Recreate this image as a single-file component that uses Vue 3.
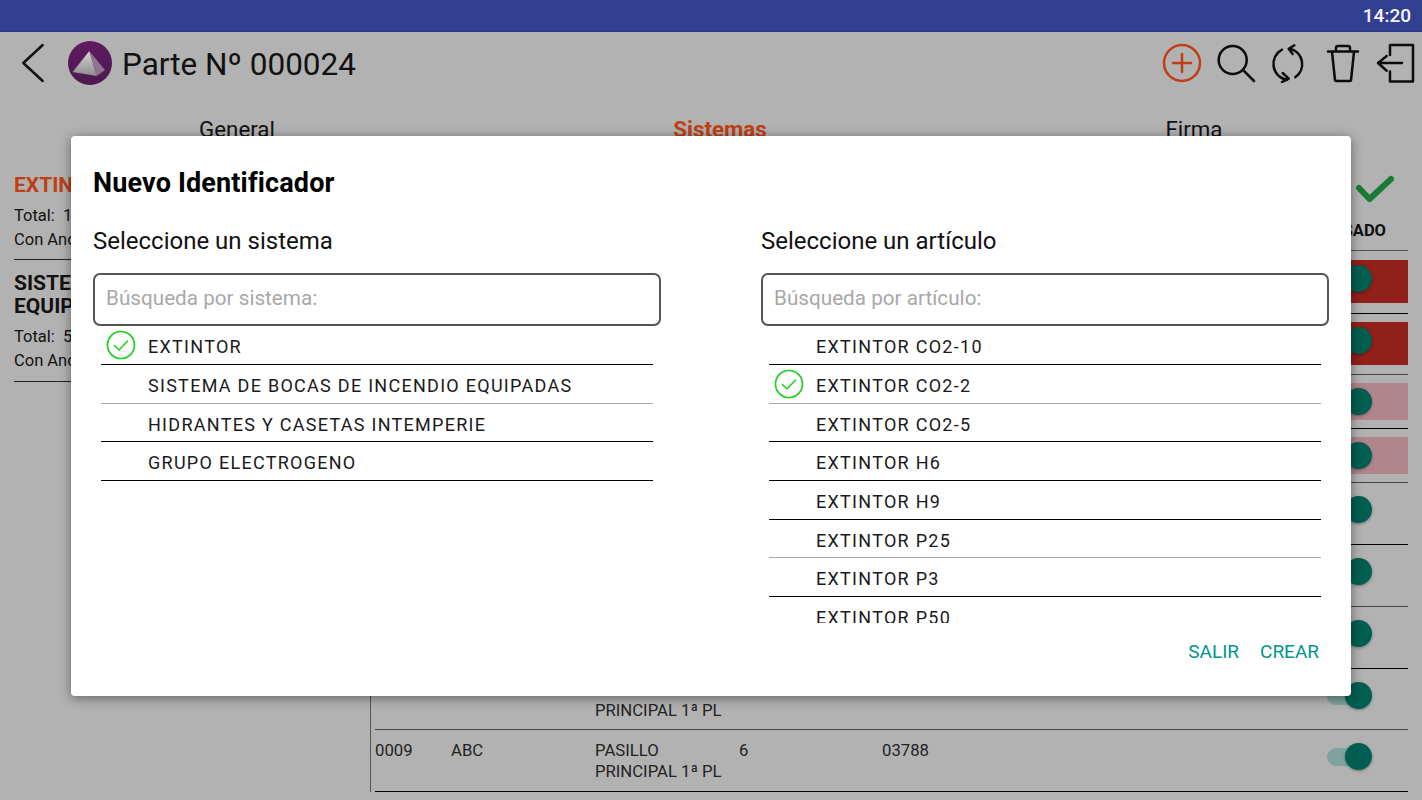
<script setup>
const blocks = [
  { title: 'EXTINTOR', cls: 'accent', total: 'Total:  1' },
  { title: 'SISTEMA DE BOCAS DE INCENDIO EQUIPADAS', cls: '', total: 'Total:  5' },
]
const rows = [
  { key: 1, h: 63, tone: 'red' },
  { key: 2, h: 61, tone: 'red' },
  { key: 3, h: 54, tone: 'pink' },
  { key: 4, h: 54, tone: 'pink' },
  { key: 5, h: 62, tone: '' },
  { key: 6, h: 62, tone: '' },
  { key: 7, h: 62, tone: '' },
  { key: 8, h: 61, tone: '', loc: ['PASILLO', 'PRINCIPAL 1ª PL'] },
  { key: 9, h: 62, tone: '', id: '0009', name: 'ABC', loc: ['PASILLO', 'PRINCIPAL 1ª PL'], n: '6', code: '03788' },
]
const systems = ['EXTINTOR', 'SISTEMA DE BOCAS DE INCENDIO EQUIPADAS', 'HIDRANTES Y CASETAS INTEMPERIE', 'GRUPO ELECTROGENO']
const articles = ['EXTINTOR CO2-10', 'EXTINTOR CO2-2', 'EXTINTOR CO2-5', 'EXTINTOR H6', 'EXTINTOR H9', 'EXTINTOR P25', 'EXTINTOR P3', 'EXTINTOR P50']
const columns = [
  { title: 'Seleccione un sistema', hint: 'Búsqueda por sistema:', items: systems, selected: 0 },
  { title: 'Seleccione un artículo', hint: 'Búsqueda por artículo:', items: articles, selected: 1 },
]
</script>

<template>
  <div class="app">
    <div class="status">14:20</div>

    <header class="bar">
      <svg class="back" viewBox="0 0 24 40" width="24" height="40">
        <path d="M21.700 2 L2.300 20 L21.700 38" />
      </svg>
      <svg class="logo" viewBox="0 0 44 44" width="44" height="44">
        <defs>
          <linearGradient id="disc" x1="0" y1="0" x2="0" y2="1">
            <stop offset="0" stop-color="#5f1b60" />
            <stop offset="1" stop-color="#4c1a50" />
          </linearGradient>
          <linearGradient id="face" x1="0" y1="0" x2="0" y2="1">
            <stop offset="0" stop-color="#d4d3d4" />
            <stop offset="1" stop-color="#8f8e8f" />
          </linearGradient>
        </defs>
        <circle cx="22" cy="22" r="22" fill="url(#disc)" />
        <path d="M21.300 10 L4.700 31 L28.700 35 Z" fill="url(#face)" />
        <path d="M21.300 10 L37 29 L28.700 35 Z" fill="#8d7590" />
      </svg>
      <h1 class="doc">Parte Nº 000024</h1>
      <div class="tools">
        <svg viewBox="0 0 40 40" width="40" height="40" class="ico orange">
          <circle cx="20" cy="20" r="18" /><path d="M20 11 V29 M11 20 H29" />
        </svg>
        <svg viewBox="0 0 40 40" width="40" height="40" class="ico">
          <circle cx="16.700" cy="17" r="14" /><path d="M27 27 L38 38" />
        </svg>
        <svg viewBox="0 0 40 40" width="40" height="40" class="ico">
          <path d="M13 6.700 A16 16 0 0 0 18 36.700 M21.300 5.700 A16 16 0 0 1 26.300 34.300" />
          <path d="M25.300 2.300 L19.700 5.700 L23.700 11 M13.700 30 L19.700 35.700 L13 39" />
        </svg>
        <svg viewBox="0 0 40 40" width="40" height="40" class="ico">
          <path d="M5 8.500 H35 M13 8 V5 Q13 3 15 3 H25 Q27 3 27 5 V8 M9 9 L12 37 Q12 38 13.500 38 H26.500 Q28 38 28 37 L31 9" />
        </svg>
        <svg viewBox="0 0 40 40" width="40" height="40" class="ico">
          <path d="M14 12 V2 H37 V38.500 H14 V28.500 M2 20 H26 M10.700 13 L2 20 L10.700 27.700" />
        </svg>
      </div>
    </header>

    <nav class="tabs">
      <span>General</span>
      <span class="on">Sistemas</span>
      <span>Firma</span>
    </nav>

    <main class="body">
      <aside class="side">
        <section v-for="b in blocks" :key="b.title" class="block">
          <h2 :class="b.cls">{{ b.title }}</h2>
          <p>{{ b.total }}</p>
          <p>Con Anomalías</p>
        </section>
      </aside>

      <div class="table">
        <div class="thead">
          <svg class="tick" viewBox="0 0 38 28" width="38" height="28">
            <path d="M3 13 L13.500 24 L35 4" />
          </svg>
          <div class="tlabel">REVISADO</div>
        </div>
        <div v-for="r in rows" :key="r.key" class="row" :style="{ height: r.h + 'px' }">
          <span>{{ r.id }}</span>
          <span>{{ r.name }}</span>
          <span><span v-for="l in r.loc" :key="l" class="ln">{{ l }}</span></span>
          <span>{{ r.n }}</span>
          <span>{{ r.code }}</span>
          <div class="state" :class="r.tone">
            <div class="switch"><i class="knob"></i></div>
          </div>
        </div>
      </div>
    </main>

    <div class="overlay">
      <section class="dialog">
        <h2 class="dtitle">Nuevo Identificador</h2>
        <div class="cols">
          <div v-for="c in columns" :key="c.title" class="col">
            <h3>{{ c.title }}</h3>
            <input class="search" :placeholder="c.hint" />
            <ul class="list">
              <li v-for="(it, i) in c.items" :key="it">
                <svg v-if="i === c.selected" class="ok" viewBox="0 0 30 30" width="30" height="30">
                  <circle cx="15" cy="15" r="13.500" /><path d="M8.500 15.500 L13 20 L21.500 11" />
                </svg>
                <span>{{ it }}</span>
              </li>
            </ul>
          </div>
        </div>
        <footer class="actions">
          <span>SALIR</span>
          <span>CREAR</span>
        </footer>
      </section>
    </div>
  </div>
</template>

<style scoped>
.app {
  position: relative;
  width: 1422px;
  height: 800px;
  overflow: hidden;
  background: #b2b2b2;
  color: #111;
  font-family: Roboto, "Liberation Sans", sans-serif;
}
.status {
  box-sizing: border-box;
  height: 32px;
  padding: 5px 11px 0 0;
  text-align: right;
  font-size: 19px;
  line-height: 22px;
  font-weight: 500;
  color: #f4f4f8;
  background: #323f91;
  border-bottom: 1px solid #24398f;
}
.bar {
  display: flex;
  align-items: center;
  height: 62px;
  padding-left: 21px;
}
.back { margin-right: 23px; }
.back path { fill: none; stroke: #111; stroke-width: 2.500; stroke-linecap: round; stroke-linejoin: round; }
.logo { margin-right: 10px; }
.doc {
  margin: 3px 0 0;
  font-size: 31.500px;
  line-height: 40px;
  font-weight: 400;
}
.tools {
  display: flex;
  gap: 13.500px;
  margin-left: auto;
  padding-right: 6px;
}
.ico { fill: none; stroke: #0c0c0c; stroke-width: 2.500; stroke-linecap: round; stroke-linejoin: round; }
.orange { stroke: #c04016; }
.tabs {
  display: grid;
  grid-template-columns: 474px 492px 456px;
  padding-top: 23px;
  font-size: 22.300px;
  line-height: 24px;
  text-align: center;
}
.tabs .on { color: #c04016; font-weight: 700; }
.body { display: flex; align-items: flex-start; margin-top: -1px; }
.side {
  box-sizing: border-box;
  width: 371px;
  height: 652px;
  padding: 34px 14px 0;
  border-right: 1px solid #555;
}
.block { padding-bottom: 7px; border-bottom: 1px solid #222; margin-bottom: 12px; }
.block:last-child { padding-bottom: 8px; }
.block h2 {
  margin: 0 0 7px;
  font-size: 21px;
  line-height: 23px;
  font-weight: 700;
}
.block h2.accent { color: #c04016; }
.block p {
  margin: 0;
  font-size: 16.500px;
  line-height: 24px;
  white-space: pre;
}
.table {
  box-sizing: border-box;
  width: 1033px;
  margin-left: 4px;
}
.thead {
  box-sizing: border-box;
  height: 111px;
  padding-top: 35px;
  border-bottom: 1px solid #555;
}
.tick { display: block; margin-left: 981px; }
.tick path { fill: none; stroke: #1a7a36; stroke-width: 6; stroke-linecap: round; stroke-linejoin: round; }
.tlabel {
  margin: 19px 22px 0 0;
  text-align: right;
  font-size: 16.500px;
  line-height: 18px;
  font-weight: 700;
}
.row {
  box-sizing: border-box;
  display: grid;
  grid-template-columns: 76px 144px 144px 143px 1fr 118px;
  padding-top: 11px;
  border-bottom: 1px solid #444;
  font-size: 16.700px;
  line-height: 20.500px;
  color: #222;
}
.row:nth-child(even) { border-bottom-color: #000; }
.ln { display: block; white-space: nowrap; }
.state {
  align-self: start;
  margin-top: -3px;
  padding: 5px 36px 0 0;
  display: flex;
  justify-content: flex-end;
}
.row:nth-child(2) .state { margin-top: -2px; }
.state.red { height: 43px; box-sizing: border-box; background: #91201a; }
.state.pink { height: 37px; box-sizing: border-box; background: #b0868c; }
.switch {
  position: relative;
  width: 45px;
  height: 27px;
}
.switch::before {
  content: "";
  position: absolute;
  left: 0;
  right: 9px;
  top: 4.500px;
  height: 18px;
  border-radius: 9px;
  background: #7fa39c;
}
.knob {
  position: absolute;
  right: 0;
  top: 0;
  width: 27px;
  height: 27px;
  border-radius: 50%;
  background: #005f50;
  box-shadow: 0 1px 3px rgba(0, 0, 0, 0.35);
}
.overlay {
  position: absolute;
  inset: 32px 0 0;
  display: flex;
  align-items: center;
  justify-content: center;
}
.dialog {
  box-sizing: border-box;
  width: 1280px;
  height: 560px;
  padding: 32px 22px 0;
  background: #fff;
  border-radius: 4px;
  box-shadow: 0 2px 12px rgba(0, 0, 0, 0.45);
  color: #000;
}
.dtitle {
  margin: 0 0 28px;
  font-size: 27px;
  line-height: 30px;
  font-weight: 700;
  letter-spacing: 0.15px;
}
.cols { display: grid; grid-template-columns: 568px 568px; gap: 100px; }
.col h3 {
  margin: 1px 0 18px;
  font-size: 24px;
  line-height: 28px;
  font-weight: 400;
  color: #111;
}
.search {
  box-sizing: border-box;
  display: block;
  width: 100%;
  height: 53px;
  padding: 0 11px 3px;
  border: 2px solid #555;
  border-radius: 7px;
  outline: none;
  background: #fff;
  font-family: inherit;
  font-size: 20.700px;
}
.search::placeholder { color: #a8a8a8; opacity: 1; }
.list {
  height: 296.600px;
  margin: 0.400px 8px 0;
  padding: 0;
  list-style: none;
  overflow: hidden;
}
.list li {
  box-sizing: border-box;
  position: relative;
  height: 38.650px;
  padding-left: 47px;
  border-bottom: 1px solid #000;
  font-size: 18px;
  line-height: 41px;
  letter-spacing: 1.280px;
  color: #1a1a1a;
  white-space: nowrap;
}
.list li:nth-child(4n+2) { border-bottom-color: #aaa; }
.ok {
  position: absolute;
  left: 5px;
  top: 4px;
  fill: none;
  stroke: #1fd01f;
  stroke-width: 1.700;
  stroke-linecap: round;
  stroke-linejoin: round;
}
.ok path { stroke-width: 1.500; }
.actions {
  display: flex;
  justify-content: flex-end;
  gap: 21px;
  margin: 18px 10px 0 0;
  font-size: 19px;
  line-height: 22px;
  color: #009688;
}
</style>
